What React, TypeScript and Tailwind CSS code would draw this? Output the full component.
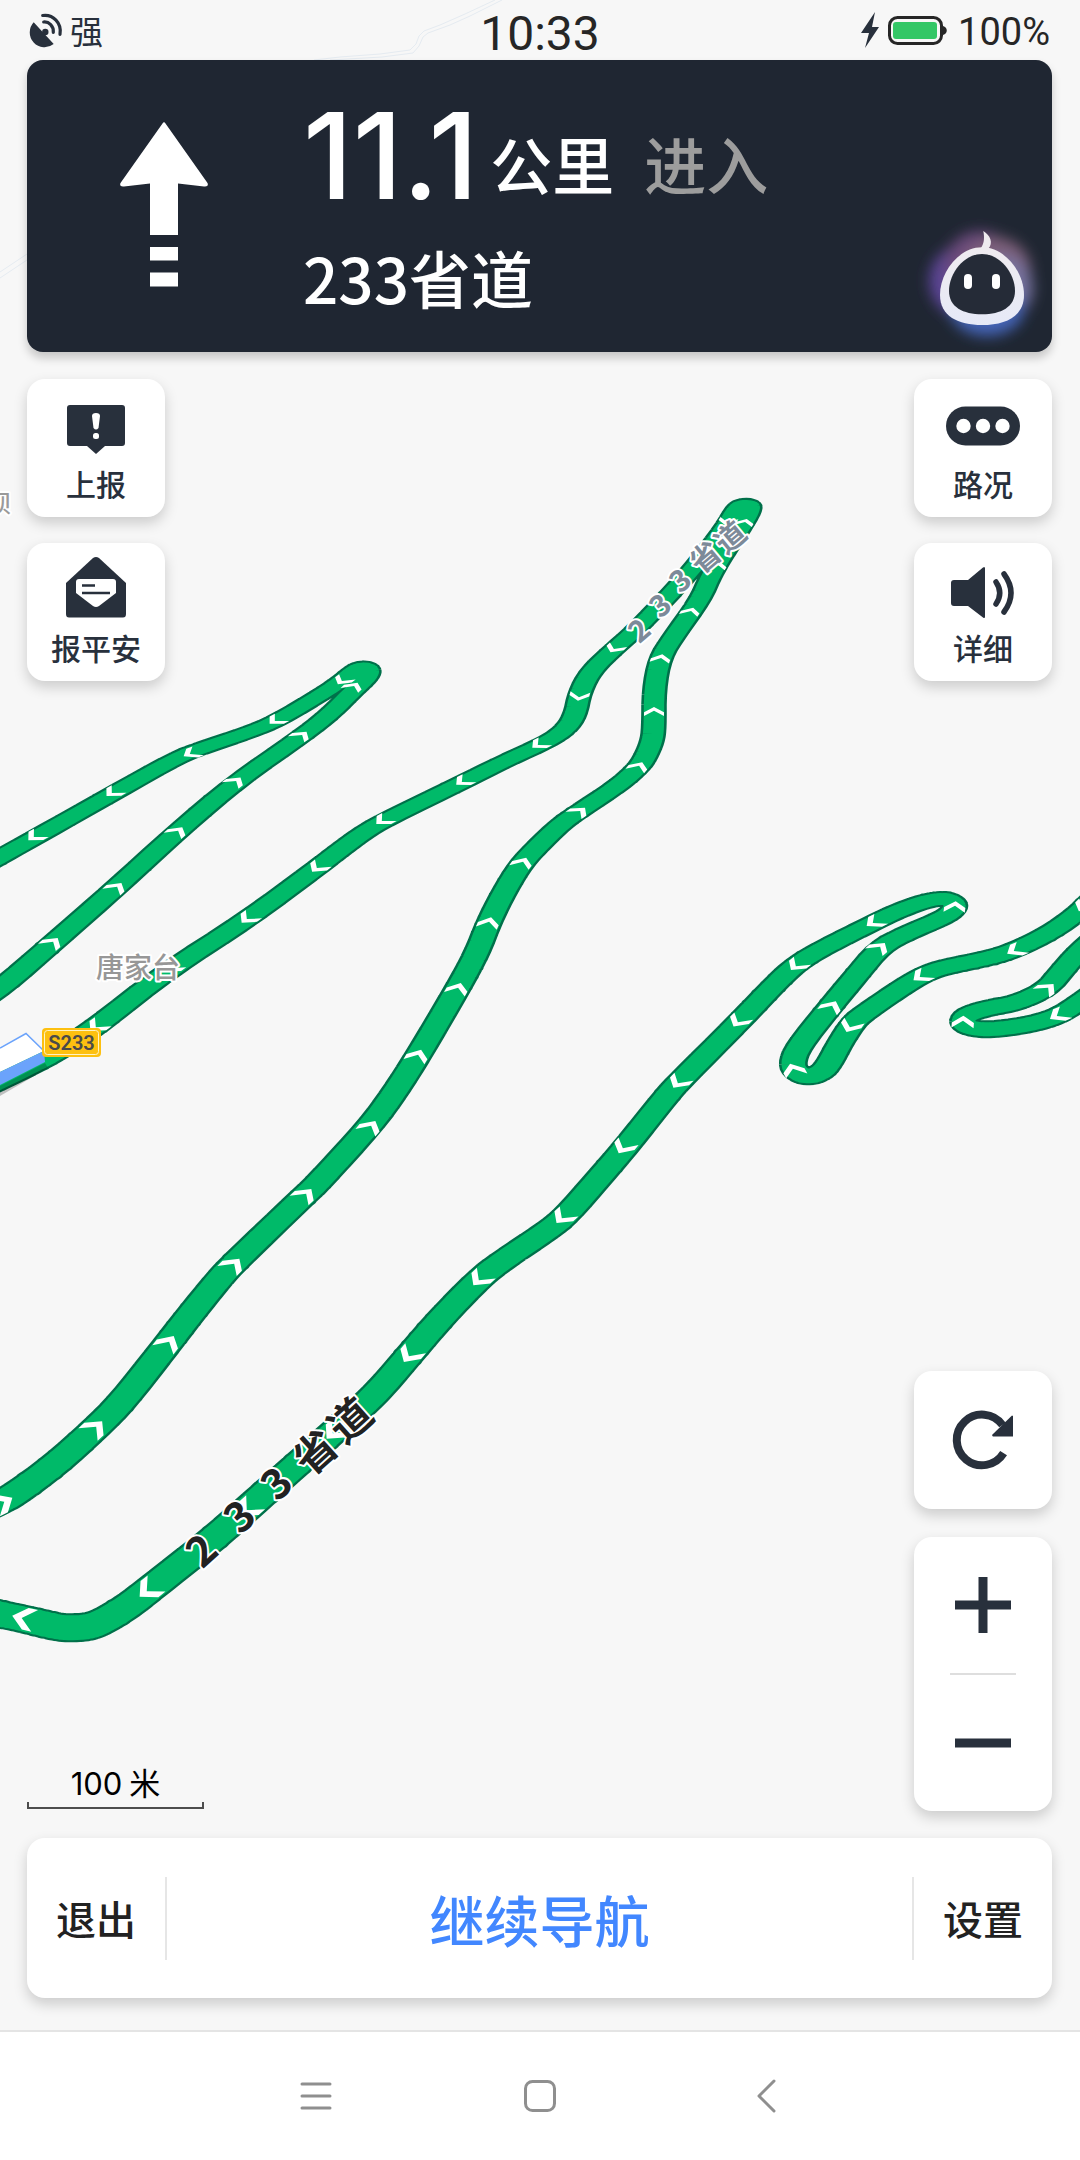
import type { ReactNode } from "react";

type Point = [number, number];

const SANS = "font-['Noto_Sans_CJK_SC','Noto_Sans',sans-serif]";

/* ---------- Map geometry ---------- */

const routes: { path: Point[]; arrows: Point[] }[] = [
  {
    path: [
      [-30, 1008], [0, 989], [53, 943], [117, 887], [178, 831], [237, 781], [302, 736], [330, 714], [353, 691],
      [366, 679], [370, 671], [366, 666], [357, 668], [344, 679], [327, 691], [277, 721], [247, 733], [205, 747],
      [178, 757], [114, 793], [36, 837], [0, 857], [-30, 874],
    ],
    arrows: [
      [53, 942], [117, 887], [178, 831], [236, 781], [302, 735], [354, 686], [342, 681], [275, 721], [190, 754],
      [112, 793], [34, 837],
    ],
  },
  {
    path: [
      [-30, 1517], [0, 1502], [14, 1495], [55, 1465], [96, 1428], [122, 1402], [163, 1350], [190, 1315], [220, 1278],
      [234, 1263], [305, 1195], [317, 1184], [371, 1125], [395, 1092], [418, 1056], [458, 988], [477, 953],
      [489, 922], [504, 892], [521, 864], [540, 844], [561, 824], [578, 812], [619, 785], [638, 768], [645, 758],
      [652, 742], [654, 728], [654, 690], [660, 658], [674, 636], [700, 600], [711, 575], [725, 552], [743, 525],
      [752, 508], [748, 502], [738, 505], [726, 526], [700, 560], [676, 588], [636, 630], [613, 650], [591, 671],
      [580, 692], [575, 716], [565, 730], [547, 742], [505, 761], [463, 782], [383, 821], [363, 833], [340, 850],
      [318, 867], [248, 919], [167, 971], [97, 1026], [70, 1044], [45, 1059], [0, 1081], [-30, 1095],
    ],
    arrows: [
      [4, 1502], [96, 1427], [169, 1342], [234, 1264], [306, 1194], [371, 1126], [418, 1055], [458, 988], [489, 922],
      [523, 862], [580, 811], [639, 766], [654, 711], [661, 658], [691, 611], [718, 565], [745, 522], [727, 522],
      [614, 649], [579, 697], [538, 745], [462, 782], [382, 821], [317, 868], [247, 919], [171, 968], [96, 1027],
    ],
  },
  {
    path: [
      [1110, 885], [1093, 898], [1078, 913], [1050, 933], [1015, 950], [990, 958], [945, 967], [927, 973],
      [907, 984], [863, 1014], [853, 1023], [840, 1043], [829, 1064], [821, 1073], [808, 1077], [797, 1073],
      [792, 1064], [798, 1047], [830, 1007], [855, 977], [880, 947], [907, 933], [943, 918], [954, 910], [955, 903],
      [945, 898], [925, 901], [898, 911], [877, 921], [823, 948], [798, 963], [779, 980], [740, 1021], [680, 1081],
      [668, 1094], [625, 1148], [600, 1177], [566, 1216], [547, 1231], [502, 1261], [480, 1278], [442, 1317],
      [411, 1353], [383, 1386], [363, 1406], [330, 1435], [293, 1468], [248, 1508], [212, 1540], [150, 1589],
      [127, 1607], [102, 1622], [88, 1627], [70, 1628], [57, 1627], [24, 1619], [0, 1614], [-30, 1608],
    ],
    arrows: [
      [1083, 907], [1014, 951], [920, 977], [850, 1027], [793, 1069], [832, 1006], [880, 947], [955, 906], [873, 923],
      [796, 966], [738, 1022], [678, 1083], [623, 1148], [562, 1218], [479, 1280], [409, 1356], [333, 1433],
      [247, 1510], [147, 1591], [22, 1618],
    ],
  },
  {
    path: [
      [1110, 980], [1080, 1002], [1060, 1015], [1040, 1022], [1015, 1027], [985, 1030], [967, 1027], [962, 1021],
      [968, 1014], [988, 1008], [1017, 1003], [1047, 989], [1062, 971], [1080, 950], [1110, 925],
    ],
    arrows: [[1057, 1016], [963, 1021], [1048, 988]],
  },
];

/* The camera is tilted: the ground gets narrower and flatter towards the horizon. */
const roadWidth = (y: number) => 25.5 + (y - 700) * 0.009;
const flatten = (y: number) => 0.52 + (y - 740) * 0.00038;

const f = (n: number) => n.toFixed(2);

/* Rounds the polyline by cutting its corners. */
function smooth(points: Point[]): Point[] {
  const out: Point[] = [points[0]];
  for (let i = 0; i < points.length - 1; i++) {
    const [ax, ay] = points[i];
    const [bx, by] = points[i + 1];
    out.push([ax * 0.75 + bx * 0.25, ay * 0.75 + by * 0.25]);
    out.push([ax * 0.25 + bx * 0.75, ay * 0.25 + by * 0.75]);
  }
  out.push(points[points.length - 1]);
  return out;
}

/* Half width and half height of the round pen that draws the road at height y. */
function pen(y: number, inset: number) {
  const half = roadWidth(y) / 2;
  return { rx: half - inset, ry: half * flatten(y) - inset * 0.8 };
}

function ribbon(points: Point[], inset: number): string {
  let d = "";
  for (let i = 0; i < points.length - 1; i++) {
    const [ax, ay] = points[i];
    const [bx, by] = points[i + 1];
    const a = pen(ay, inset);
    const b = pen(by, inset);
    const ux = bx - ax;
    const uy = ((by - ay) * a.rx) / a.ry;
    const len = Math.hypot(ux, uy) || 1;
    const nx = -uy / len;
    const ny = ux / len;
    d += `M${f(ax - nx * a.rx)} ${f(ay - ny * a.ry)}L${f(bx - nx * b.rx)} ${f(by - ny * b.ry)}`;
    d += `L${f(bx + nx * b.rx)} ${f(by + ny * b.ry)}L${f(ax + nx * a.rx)} ${f(ay + ny * a.ry)}Z`;
    d += `M${f(ax - a.rx)} ${f(ay)}A${f(a.rx)} ${f(a.ry)} 0 1 1 ${f(ax + a.rx)} ${f(ay)}`;
    d += `A${f(a.rx)} ${f(a.ry)} 0 1 1 ${f(ax - a.rx)} ${f(ay)}Z`;
  }
  return d;
}

const chevron: Point[] = [
  [-0.39, 0.1], [0, -0.3], [0.39, 0.1], [0.39, 0.39], [0, -0.01], [-0.39, 0.39],
];

function arrowHead([x, y]: Point, path: Point[]): string {
  let best = 0;
  let bestDistance = Infinity;
  for (let i = 0; i < path.length - 1; i++) {
    const mx = (path[i][0] + path[i + 1][0]) / 2;
    const my = (path[i][1] + path[i + 1][1]) / 2;
    const distance = Math.hypot(mx - x, my - y);
    if (distance < bestDistance) {
      bestDistance = distance;
      best = i;
    }
  }
  const k = flatten(y);
  const w = roadWidth(y);
  const [ax, ay] = path[best];
  const [bx, by] = path[best + 1];
  const dx = bx - ax;
  const dy = (by - ay) / k;
  const len = Math.hypot(dx, dy) || 1;
  const fx = dx / len;
  const fy = dy / len;
  const corners = chevron.map(([cx, cy]) => {
    const px = (-fy * cx - fx * cy) * w;
    const py = (fx * cx - fy * cy) * w * k;
    return `${f(x + px)} ${f(y + py)}`;
  });
  return `M${corners.join("L")}Z`;
}

const roadNames = [
  { size: 30, angle: -40, fill: "#7d8a99", weight: 600, chars: [["2", 639, 630], ["3", 660, 605], ["3", 680, 580], ["省", 705, 557], ["道", 730, 537]] },
  { size: 42, angle: -42, fill: "#222222", weight: 600, chars: [["2", 201, 1550], ["3", 239, 1516], ["3", 276, 1483], ["省", 315, 1452], ["道", 350, 1420]] },
] as { size: number; angle: number; fill: string; weight: number; chars: [string, number, number][] }[];

function MapCanvas() {
  return (
    <svg
      className={`absolute inset-0 h-full w-full ${SANS}`}
      viewBox="0 0 1080 2160"
      preserveAspectRatio="xMidYMid slice"
      role="img"
      aria-label="地图"
    >
      <g fill="none" stroke="#e5ebf1" strokeWidth="1">
        <path d="M0 272 27 254M0 278 27 260M314 60 340 57 380 54 410 50 416 44 419 36 424 31 440 25 465 14 495 0" />
        <path d="M330 60 382 57 413 53 419 46 423 37 428 33 450 25 470 16 502 0" />
      </g>

      {routes.map(({ path, arrows }, i) => {
        const curve = smooth(smooth(path));
        return (
          <g key={i}>
            <path d={ribbon(curve, 0)} fill="#00704a" />
            <path d={ribbon(curve, 2.6)} fill="#00ba69" />
            <path d={arrows.map((p) => arrowHead(p, curve)).join("")} fill="#ffffff" />
          </g>
        );
      })}

      {/* Vehicle marker entering from the left edge */}
      <path d="M0 1086 45 1063 48 1068 0 1096Z" fill="#000000" opacity="0.22" />
      <path d="M0 1047 26 1033 44 1051 0 1072Z" fill="#ffffff" />
      <path d="M0 1048 26 1033.500 44 1051" fill="none" stroke="#6ba3fb" strokeWidth="1.500" />
      <path d="M0 1072 44 1051 45 1062 0 1085Z" fill="#6ba3fb" />

      <g paintOrder="stroke" stroke="#ffffff" strokeWidth="4" strokeLinejoin="round">
        <text x="96" y="978" fontSize="28" fontWeight="500" fill="#979797">唐家台</text>
        <text x="11" y="512" textAnchor="end" fontSize="24" fontWeight="500" fill="#9a9a9a">坝</text>
        {roadNames.map((name) =>
          name.chars.map(([char, x, y]) => (
            <text
              key={`${x}-${y}`}
              transform={`translate(${x} ${y}) rotate(${name.angle})`}
              y={name.size * 0.37}
              textAnchor="middle"
              fontSize={name.size}
              fontWeight={name.weight}
              fill={name.fill}
            >
              {char}
            </text>
          )),
        )}
      </g>

      <rect x="42" y="1028" width="59" height="29" rx="4" fill="#fdc010" />
      <rect x="44.500" y="1030.500" width="54" height="24" rx="3" fill="none" stroke="#fff3c4" strokeWidth="1" />
      <text x="71.500" y="1050" textAnchor="middle" className="font-['Roboto',sans-serif]" fontSize="20" fontWeight="600" fill="#4a4a4a">
        S233
      </text>
    </svg>
  );
}

/* ---------- Status bar ---------- */

function StatusBar() {
  return (
    <div className="grid h-[60px] grid-cols-3 items-center px-7 text-[#262626]">
      <div className="flex items-center gap-1.5">
        <svg className="h-9 w-9" viewBox="0 0 36 36" aria-hidden="true">
          <path d="M5.700 10.300A14.800 14.800 0 0 0 25.700 32Z" fill="#28303c" />
          <circle cx="17.300" cy="20" r="3.200" fill="#28303c" />
          <path d="M15.700 10C21 9.500 25.800 14 25.300 20.300M14.700 3.500C25 2 34 11 32 22.300" fill="none" stroke="#28303c" strokeWidth="3.200" strokeLinecap="round" />
        </svg>
        <span className={`text-[33px] leading-[40px] font-normal text-[#28303c] ${SANS}`}>强</span>
      </div>
      <time className="mt-2 text-center font-['Roboto',sans-serif] text-[48px] leading-[52px] font-normal">10:33</time>
      <div className="flex items-center justify-end gap-2.5 pr-0.5">
        <svg className="h-9 w-[88px]" viewBox="0 0 88 36" role="img" aria-label="电池充电中">
          <path d="M15 0 1 21H9L5 36 19 15H12Z" fill="#28303c" />
          <rect x="29.500" y="5.500" width="52" height="26" rx="8" fill="none" stroke="#262626" strokeWidth="3" />
          <rect x="33" y="10" width="44" height="17" rx="3" fill="#33c766" />
          <path d="M83 14c5 1 5 8 0 9Z" fill="#262626" />
        </svg>
        <span className="mt-1 font-['Roboto',sans-serif] text-[38px] leading-[48px] font-normal">100%</span>
      </div>
    </div>
  );
}

/* ---------- Guidance banner ---------- */

function Robot() {
  return (
    <svg className="h-[120px] w-[120px] overflow-visible" viewBox="0 0 120 120" aria-hidden="true">
      <defs>
        <filter id="glow" x="-30%" y="-30%" width="160%" height="160%">
          <feGaussianBlur stdDeviation="7" />
        </filter>
        <linearGradient id="shell" x1="0" y1="0" x2="0" y2="1">
          <stop offset="0" stopColor="#efebef" />
          <stop offset="1" stopColor="#e6e9f7" />
        </linearGradient>
      </defs>
      <g filter="url(#glow)">
        <circle cx="40" cy="55" r="37" fill="#5b4496" />
        <circle cx="54" cy="41" r="36" fill="#6a4a7c" />
        <circle cx="70" cy="46" r="35" fill="#7d5e78" />
        <circle cx="74" cy="62" r="33" fill="#77729e" />
        <ellipse cx="61" cy="83" rx="37" ry="27" fill="#4565b8" />
      </g>
      <path d="M57.300 5C64 9 68 17 62 23L55 22C58.500 17 58.500 11 57.300 5Z" fill="#efebef" />
      <path d="M56 21.300C79 21.300 98 46 98 69C98 90 80 99 56 99C32 99 14 90 14 69C14 46 33 21.300 56 21.300Z" fill="url(#shell)" />
      <path d="M56 28C74 28 89 47 89 65C89 81 75 88.300 56 88.300C37 88.300 23 81 23 65C23 47 38 28 56 28Z" fill="#252b37" />
      <rect x="38" y="48" width="8" height="15" rx="4" fill="#ffffff" />
      <rect x="66" y="48" width="8" height="15" rx="4" fill="#ffffff" />
    </svg>
  );
}

function GuidanceBanner() {
  return (
    <section className="relative flex h-[292px] rounded-2xl bg-[#1f2632] text-white shadow-[0_6px_10px_rgba(0,0,0,0.2)]">
      <div className="flex w-[274px] shrink-0 justify-center pt-[62px]">
        <svg className="h-[165px] w-[88px]" viewBox="0 0 88 165" role="img" aria-label="直行">
          <path d="M42.500 1.500Q44 -1 45.500 1.500L87.500 61Q89 65 84 64.500L58 61.500V113H30V61.500L4 64.500Q-1 65 .5 61Z" fill="#ffffff" />
          <path d="M30 125H58V138.500H30ZM30 150.500H58V164.500H30Z" fill="#ffffff" />
        </svg>
      </div>
      <div className={`pt-7 pl-0.5 font-medium whitespace-nowrap ${SANS}`}>
        <div className="flex h-[136px] items-end">
          <span className="font-['Inter',sans-serif] text-[120px] leading-[136px]">11.1</span>
          <span className="pb-4 pl-3 text-[62px] leading-[90px]">公里</span>
          <span className="pb-4 pl-[30px] text-[62px] leading-[90px] text-[#9d9d9d]">进入</span>
        </div>
        <div className="text-[62px] leading-[106px]">233省道</div>
      </div>
      <div className="absolute right-1.5 bottom-1.5">
        <Robot />
      </div>
    </section>
  );
}

/* ---------- Floating buttons ---------- */

const CARD = "rounded-[18px] bg-white shadow-[0_6px_14px_rgba(0,0,0,0.18)]";

function MapButton({ label, children }: { label: string; children: ReactNode }) {
  return (
    <button type="button" className={`flex h-[138px] w-[138px] flex-col items-center pt-3 ${CARD}`}>
      <svg className="h-16 w-20" viewBox="0 0 80 64" fill="#28303c" aria-hidden="true">
        {children}
      </svg>
      <span className="mt-2 text-[30px] leading-10 font-medium text-[#28303c]">{label}</span>
    </button>
  );
}

function TopButtons() {
  return (
    <div className="mt-[27px] flex justify-between">
      <div className="flex flex-col gap-[26px]">
        <MapButton label="上报">
          <path d="M14 14H66Q69 14 69 17V52Q69 55 66 55H49L40 63 31 55H14Q11 55 11 52V17Q11 14 14 14Z" />
          <path d="M36 25Q36 22 40 22T44 25L42.500 37Q40 40 37.500 37Z" fill="#ffffff" />
          <rect x="37" y="42" width="6" height="6" rx="2.500" fill="#ffffff" />
        </MapButton>
        <MapButton label="报平安">
          <path d="M37 3Q40 1 43 3L70 28V59Q70 62.500 67 62.500H13Q10 62.500 10 59V28Z" />
          <path d="M23 24H57Q60 24 60 27V38L43 51Q40 53 37 51L20 38V27Q20 24 23 24Z" fill="#ffffff" />
          <path d="M26 30.500H39M26 38H54" stroke="#28303c" strokeWidth="2.500" />
        </MapButton>
      </div>
      <div className="flex flex-col gap-[26px]">
        <MapButton label="路况">
          <rect x="3" y="15.500" width="74" height="39" rx="19.500" />
          <circle cx="20.500" cy="35" r="7.200" fill="#ffffff" />
          <circle cx="40" cy="35" r="7.200" fill="#ffffff" />
          <circle cx="59.500" cy="35" r="7.200" fill="#ffffff" />
        </MapButton>
        <MapButton label="详细">
          <path d="M11 25H25L40 12.500Q42 11 42 13.500V61.500Q42 64 40 62.500L25 51H11Q8 51 8 48V28Q8 25 11 25Z" />
          <path d="M53 27Q60.500 38 53 49M61 19Q75 38 61 57" fill="none" stroke="#28303c" strokeWidth="5.500" strokeLinecap="round" />
        </MapButton>
      </div>
    </div>
  );
}

function ScaleBar() {
  return (
    <div className="mb-0.5 w-[177px]">
      <div className={`text-center text-[31px] leading-9 font-normal text-black ${SANS}`}>
        <span className="font-['Inter',sans-serif]">100</span> 米
      </div>
      <div className="h-[7px] border-2 border-t-0 border-[#4d4d4d]" />
    </div>
  );
}

function MapControls() {
  return (
    <div className="flex flex-col gap-7">
      <button type="button" aria-label="刷新路线" className={`flex h-[138px] w-[138px] items-center justify-center ${CARD}`}>
        <svg className="mt-0.5 h-[72px] w-[72px]" viewBox="0 0 72 72" aria-hidden="true">
          <path d="M56.600 48.200A25.300 25.300 0 1 1 55.500 20" fill="none" stroke="#28303c" strokeWidth="8" />
          <path d="M66 11V31.500H46Q44.500 31 45.500 29.500L65 10.500Z" fill="#28303c" />
        </svg>
      </button>
      <div className={`flex w-[138px] flex-col items-center ${CARD}`}>
        <button type="button" aria-label="放大" className="flex h-[136px] w-full items-center justify-center">
          <svg className="h-14 w-14" viewBox="0 0 56 56" aria-hidden="true">
            <path d="M28 0V56M0 28H56" stroke="#28303c" strokeWidth="9" />
          </svg>
        </button>
        <div className="h-0.5 w-[66px] bg-[#dedede]" />
        <button type="button" aria-label="缩小" className="flex h-[136px] w-full items-center justify-center">
          <svg className="h-14 w-14" viewBox="0 0 56 56" aria-hidden="true">
            <path d="M0 28H56" stroke="#28303c" strokeWidth="9" />
          </svg>
        </button>
      </div>
    </div>
  );
}

/* ---------- Bottom bars ---------- */

function ActionBar() {
  return (
    <div className={`mt-[27px] flex h-[160px] items-center font-medium text-[#222222] ${CARD}`}>
      <button type="button" className="h-full w-[138px] shrink-0 text-[40px]">退出</button>
      <div className="h-[83px] w-0.5 bg-[#e6e6e6]" />
      <button type="button" className="h-full flex-1 text-[55px] text-[#4287ff]">继续导航</button>
      <div className="h-[83px] w-0.5 bg-[#e6e6e6]" />
      <button type="button" className="h-full w-[138px] shrink-0 text-[40px]">设置</button>
    </div>
  );
}

function SystemNav() {
  return (
    <nav className="relative flex h-[130px] items-center justify-center gap-[189px] border-t-2 border-[#e4e4e4] bg-white">
      <button type="button" aria-label="最近任务">
        <svg className="h-9 w-9" viewBox="0 0 36 36" fill="none" stroke="#8f8f8f" strokeWidth="3" strokeLinecap="round" aria-hidden="true">
          <path d="M5 6H33M5 18H33M5 30H33" />
        </svg>
      </button>
      <button type="button" aria-label="主屏幕">
        <svg className="h-9 w-9" viewBox="0 0 36 36" fill="none" stroke="#8f8f8f" strokeWidth="3" aria-hidden="true">
          <rect x="3.500" y="3.500" width="29" height="29" rx="7" />
        </svg>
      </button>
      <button type="button" aria-label="返回">
        <svg className="h-9 w-9" viewBox="0 0 36 36" fill="none" stroke="#8f8f8f" strokeWidth="3" strokeLinecap="round" strokeLinejoin="round" aria-hidden="true">
          <path d="M27 3 12 18 27 33" />
        </svg>
      </button>
    </nav>
  );
}

export default function App() {
  return (
    <div className={`relative flex min-h-screen flex-col overflow-hidden bg-[#f7f7f7] ${SANS}`}>
      <MapCanvas />
      <header className="relative">
        <StatusBar />
      </header>
      <main className="relative flex flex-1 flex-col pr-7 pb-8 pl-[27px]">
        <GuidanceBanner />
        <TopButtons />
        <div className="mt-auto flex items-end justify-between">
          <ScaleBar />
          <MapControls />
        </div>
        <ActionBar />
      </main>
      <SystemNav />
    </div>
  );
}
